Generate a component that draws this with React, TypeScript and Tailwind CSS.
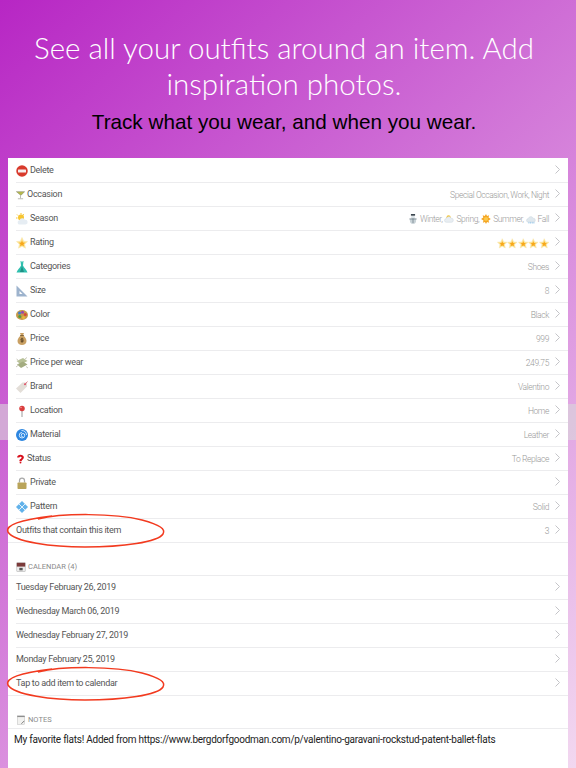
import type { ReactNode } from "react";

const Svg = ({ children, className = "w-3 h-3" }: { children: ReactNode; className?: string }) => (
  <svg viewBox="0 0 24 24" className={`${className} shrink-0`}>
    {children}
  </svg>
);

const Star = ({ className }: { className?: string }) => (
  <Svg className={className}>
    <path d="M12 1l3.300 7.300 7.700.9-5.700 5.300 1.600 7.800-6.900-4-6.900 4 1.600-7.800L1 9.200l7.700-.9z" fill="#fde08a" stroke="#f8e7ae" strokeWidth="1.200" />
    <path d="M12 7l1.800 4 4.200.5-3 2.800.9 4.200-3.900-2.200-3.900 2.200.9-4.200-3-2.800 4.200-.5z" fill="#f7a81b" />
  </Svg>
);

const Cloud = ({ fill = "#e9eef2" }: { fill?: string }) => (
  <path d="M6 20a4.500 4.500 0 0 1-.5-9 6 6 0 0 1 11.400-1A5 5 0 0 1 18 20z" fill={fill} stroke="#c5d2da" strokeWidth="1" />
);

const icons: Record<string, ReactNode> = {
  delete: (
    <Svg>
      <circle cx="12" cy="12" r="11.500" fill="#d83a2c" />
      <rect x="4" y="9" width="16" height="6" rx="1" fill="#f6eeee" />
    </Svg>
  ),
  occasion: (
    <Svg className="w-[9px] h-3">
      <path d="M1 3h22L13 13z" fill="#b6ba4a" stroke="#8f8f78" strokeWidth="1.500" />
      <path d="M12 12v9M5 22h14" stroke="#b8b8b0" strokeWidth="2.500" />
    </Svg>
  ),
  season: (
    <Svg>
      <circle cx="10" cy="9" r="6" fill="#f7c531" />
      <path d="M10 0v3M2 3l2 2M0 10h3M15 2l-1 3" stroke="#f7c531" strokeWidth="2" />
      <path d="M8 23a4 4 0 0 1-1-8.500 6 6 0 0 1 11-1 4.700 4.700 0 0 1 1 9.500z" fill="#e6edf3" />
    </Svg>
  ),
  rating: <Star />,
  categories: (
    <Svg>
      <path d="M9 0h1.500L12 3l1.500-3H15l-1 9c2 5 7 8 9 14H1c2-6 7-9 9-14z" fill="#2fbfae" />
      <path d="M12 10c-1 4-3 9-4 12h8c-1-3-3-8-4-12z" fill="#1f8f84" />
    </Svg>
  ),
  size: (
    <Svg>
      <path d="M1 1l22 22H1z" fill="#9db3cd" />
      <path d="M7 12l6 6H7z" fill="#fff" />
    </Svg>
  ),
  color: (
    <Svg>
      <ellipse cx="12" cy="12" rx="12" ry="10" fill="#c79a4a" />
      <circle cx="7" cy="8" r="3" fill="#3f7fd0" />
      <circle cx="13" cy="6.500" r="3" fill="#9a45b0" />
      <circle cx="18.500" cy="11" r="3" fill="#d64a3a" />
      <circle cx="7.500" cy="15" r="3" fill="#4f9d3f" />
      <circle cx="15" cy="17" r="3" fill="#e8b838" />
    </Svg>
  ),
  price: (
    <Svg>
      <path d="M8 0h8l-2 5c4 2 7 7 7 11 0 5-4 8-9 8s-9-3-9-8c0-4 3-9 7-11z" fill="#c9a063" />
      <path d="M8 5h8" stroke="#6f5228" strokeWidth="1.500" />
      <path d="M15 12.500c-1-1.500-6-1-5.500.8.500 1.700 6 .7 5.800 2.700-.2 1.700-5.300 1.700-6.300 0M12 9.500v10" stroke="#4d3a1e" strokeWidth="1.500" fill="none" />
    </Svg>
  ),
  wear: (
    <Svg>
      <path d="M1 8l13-6 9 6-13 7z" fill="#b7c096" />
      <path d="M2 15l12-6 9 6-13 7z" fill="#a3ac80" />
      <path d="M1 4l4 3M20 19l4 3M0 20l5-4M18 4l4-3" stroke="#c9c9bd" strokeWidth="2" />
    </Svg>
  ),
  brand: (
    <Svg>
      <path d="M0 15L13 3h9v8L9 24z" fill="#e3ded8" />
      <circle cx="18" cy="6.500" r="2" fill="#e0556b" />
      <path d="M18 6.500L23 1" stroke="#e0556b" strokeWidth="1.500" />
    </Svg>
  ),
  location: (
    <Svg>
      <path d="M12 11v13" stroke="#9a9a9a" strokeWidth="2" />
      <circle cx="12" cy="7" r="5.500" fill="#d93c3c" />
      <circle cx="10" cy="5" r="1.500" fill="#f5a0a0" />
    </Svg>
  ),
  material: (
    <Svg>
      <circle cx="12" cy="12" r="12" fill="#2d86e0" />
      <path d="M12 7a5.500 5.500 0 1 0 5.500 5.500 3.500 3.500 0 1 0-3.500 3.500M11 3c6 0 10 3.500 10 9" stroke="#dff0ff" strokeWidth="1.800" fill="none" />
    </Svg>
  ),
  status: (
    <Svg className="w-[9px] h-3">
      <path d="M3 8c0-10 18-9 18 0 0 5-6 5-6 10H9c0-7 6-6 6-10 0-3-6-3-6 0z" fill="#d8101c" />
      <circle cx="12" cy="21.500" r="2.500" fill="#d8101c" />
    </Svg>
  ),
  private: (
    <Svg>
      <path d="M7 11V7a5 5 0 0 1 10 0v4" stroke="#a9a9a9" strokeWidth="2.500" fill="none" />
      <rect x="3" y="11" width="18" height="13" rx="1.500" fill="#b9a45a" />
    </Svg>
  ),
  pattern: (
    <Svg>
      <path d="M12 0l12 12-12 12L0 12z" fill="#62b2ea" />
      <path d="M6 6l12 12M18 6L6 18" stroke="#dff0fb" strokeWidth="2" />
    </Svg>
  ),
  calendar: (
    <Svg>
      <rect x="2" y="2" width="20" height="21" fill="#ececec" stroke="#9a9a9a" />
      <rect x="2" y="2" width="20" height="9" fill="#7b3a3a" />
      <path d="M8 14h8v6H8z" fill="#555" />
    </Svg>
  ),
  notes: (
    <Svg>
      <rect x="3" y="2" width="18" height="21" fill="#f2f2f0" stroke="#b5b5b5" />
      <rect x="3" y="2" width="18" height="3" fill="#8e8e8e" />
      <path d="M13 21l7-7" stroke="#666" strokeWidth="2" />
    </Svg>
  ),
  snowman: (
    <Svg className="w-[10px] h-3">
      <circle cx="12" cy="16" r="7.500" fill="#c9d3d8" />
      <circle cx="12" cy="7.500" r="4.500" fill="#dde4e8" />
      <rect x="7" y="0" width="10" height="4" fill="#3c4650" />
      <path d="M12 10v12M3 12h18" stroke="#5f6f78" strokeWidth="1.500" />
    </Svg>
  ),
  spring: (
    <Svg className="w-[10px] h-[10px]">
      <circle cx="11" cy="8" r="5" fill="#f7c531" />
      <Cloud />
    </Svg>
  ),
  sun: (
    <Svg className="w-[10px] h-[10px]">
      <path d="M12 0l2.500 5 5-2-1.500 5.500 5.500 3.500-5.500 3.500 1.500 5.500-5-2-2.500 5-2.500-5-5 2 1.500-5.500L0 12l5.500-3.500L4 3l5 2z" fill="#f5a623" />
      <circle cx="12" cy="12" r="5" fill="#fbc94a" />
    </Svg>
  ),
  fall: (
    <Svg className="w-[10px] h-[10px]">
      <Cloud fill="#dfe8ee" />
      <path d="M7 19v4M11 19v4M15 19v4M19 19v4" stroke="#8fc4ea" strokeWidth="1.800" />
    </Svg>
  ),
};

const Chevron = () => (
  <svg viewBox="0 0 5 9" className="w-[5px] h-[9px] shrink-0 ml-[6px] -mt-[2px]" fill="none" stroke="#c4c4c8" strokeWidth="1">
    <path d="M.5.500 4.500 4.500.5 8.500" />
  </svg>
);

type RowProps = { icon?: string; label: string; value?: ReactNode; full?: boolean };

function Row({ icon, label, value, full }: RowProps) {
  return (
    <div className={`h-6 border-b border-[#ececee] flex items-center pr-2 ${full ? "pl-2" : "ml-2"}`}>
      {icon && <span className="mr-[2px]">{icons[icon]}</span>}
      <span className="text-[#555] pt-px">{label}</span>
      <span className="ml-auto flex items-center pt-px text-[#999] font-light text-[8.500px] tracking-[-0.4px]">{value}</span>
      <Chevron />
    </div>
  );
}

const rows: RowProps[] = [
  { icon: "delete", label: "Delete" },
  { icon: "occasion", label: "Occasion", value: "Special Occasion, Work, Night" },
  {
    icon: "season",
    label: "Season",
    value: (
      <span className="flex items-center gap-[2px]">
        {icons.snowman} Winter, {icons.spring} Spring, {icons.sun} Summer, {icons.fall} Fall
      </span>
    ),
  },
  {
    icon: "rating",
    label: "Rating",
    value: (
      <span className="flex">
        <Star className="w-[10.500px] h-[11px]" />
        <Star className="w-[10.500px] h-[11px]" />
        <Star className="w-[10.500px] h-[11px]" />
        <Star className="w-[10.500px] h-[11px]" />
        <Star className="w-[10.500px] h-[11px]" />
      </span>
    ),
  },
  { icon: "categories", label: "Categories", value: "Shoes" },
  { icon: "size", label: "Size", value: "8" },
  { icon: "color", label: "Color", value: "Black" },
  { icon: "price", label: "Price", value: "999" },
  { icon: "wear", label: "Price per wear", value: "249.75" },
  { icon: "brand", label: "Brand", value: "Valentino" },
  { icon: "location", label: "Location", value: "Home" },
  { icon: "material", label: "Material", value: "Leather" },
  { icon: "status", label: "Status", value: "To Replace" },
  { icon: "private", label: "Private" },
  { icon: "pattern", label: "Pattern", value: "Solid" },
  { label: "Outfits that contain this item", value: "3", full: true },
];

const dates = [
  "Tuesday February 26, 2019",
  "Wednesday March 06, 2019",
  "Wednesday February 27, 2019",
  "Monday February 25, 2019",
];

function SectionHead({ icon, label }: { icon: string; label: string }) {
  return (
    <div className="h-6 pl-2 flex items-center gap-[2px] text-[7.500px] tracking-normal text-[#8a8a8a] pt-2">
      <span className="[&>svg]:w-[10px] [&>svg]:h-[10px]">{icons[icon]}</span>
      {label}
    </div>
  );
}

function Scribble({ className }: { className: string }) {
  return (
    <svg viewBox="0 0 166 36" className={`absolute ${className} w-[166px] h-9`} fill="none" stroke="#f23a1f" strokeWidth="1.500">
      <path d="M36 6C60 0 112 0 140 7c18 5 24 9 21 14-5 8-40 13-78 13C50 34 12 29 6 19 3 12 18 7 50 3" />
    </svg>
  );
}

export default function App() {
  return (
    <div className="relative w-[576px] h-[768px] overflow-hidden bg-[linear-gradient(138deg,#b726c4,#f2d8f0)] font-['Liberation_Sans',sans-serif]">
      <div className="absolute left-0 right-0 top-[404px] h-9 bg-[#d8d8d8]/60" />

      <div className="relative pt-[30px] h-[158px] pr-2 text-center">
        <h1 className="text-[29.500px] leading-9 font-light text-white font-['Lato',sans-serif] px-5">
          See all your outfits around an item. Add inspiration photos.
        </h1>
        <p className="mt-[5px] text-[20.700px] leading-[30px] text-black">Track what you wear, and when you wear.</p>
      </div>

      <div className="relative mx-2 h-[610px] pt-px bg-white font-['Roboto',sans-serif] text-[9px] tracking-[-0.3px]">
        {rows.map((r) => (
          <Row key={r.label} {...r} />
        ))}
        <div className="h-2" />
        <SectionHead icon="calendar" label="CALENDAR (4)" />
        <div className="border-t border-[#ececee]">
          {dates.map((d) => (
            <Row key={d} label={d} />
          ))}
          <Row label="Tap to add item to calendar" full />
        </div>
        <div className="h-2" />
        <SectionHead icon="notes" label="NOTES" />
        <div className="border-t border-[#ececee] pl-[6px] pt-[3px] text-[10px] tracking-[-0.25px] text-[#222]">
          My favorite flats! Added from https://www.bergdorfgoodman.com/p/valentino-garavani-rockstud-patent-ballet-flats
        </div>
        <Scribble className="-left-[6px] top-[355px]" />
        <Scribble className="-left-[6px] top-[508px]" />
      </div>
    </div>
  );
}
